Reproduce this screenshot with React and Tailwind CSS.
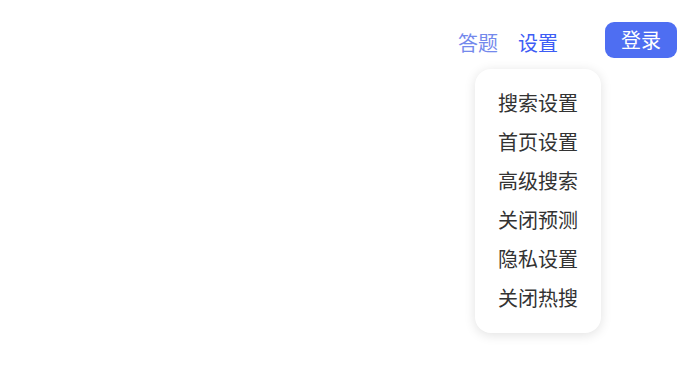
import React from "react";

const menuItems = ["搜索设置", "首页设置", "高级搜索", "关闭预测", "隐私设置", "关闭热搜"];

const App = () => {
   return (
      <div className="w-[692px] h-[378px] bg-white font-['Noto_Sans_CJK_SC','Noto_Sans',sans-serif] overflow-hidden">
         <header className="flex justify-end items-start pt-[22px] pr-[15px]">
            <a className="text-[20px] leading-[36px] pt-[3px] text-[#7489ec] mr-[20px] cursor-pointer">答题</a>
            <div className="relative">
               <a className="block text-[20px] leading-[36px] pt-[3px] text-[#3d5cf5] cursor-pointer">设置</a>
               <div className="absolute left-1/2 -translate-x-1/2 top-[47px] w-[126px] bg-white rounded-[16px] shadow-[0_2px_12px_rgba(0,0,0,0.12)] pt-[14px] pb-[16px] flex flex-col items-center">
                  {menuItems.map((item) => (
                     <div key={item} className="text-[20px] leading-[39px] text-[#333333] cursor-pointer">
                        {item}
                     </div>
                  ))}
               </div>
            </div>
            <button className="ml-[47px] w-[72px] h-[36px] rounded-[9px] bg-[#4e6ef2] text-white text-[20px] leading-[36px]">
               登录
            </button>
         </header>
      </div>
   );
};

export default App;
